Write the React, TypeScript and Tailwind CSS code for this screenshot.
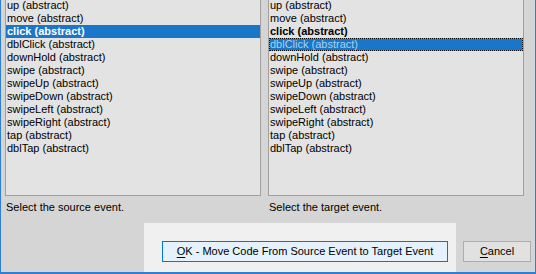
const events = [
	"up",
	"move",
	"click",
	"dblClick",
	"downHold",
	"swipe",
	"swipeUp",
	"swipeDown",
	"swipeLeft",
	"swipeRight",
	"tap",
	"dblTap",
];

/** A plain Win32-style list box */
const EventList = ({ selected, focused, bold }: { selected?: string; focused?: string; bold?: string }) => (
	<div className="-mt-[2px] h-[198px] w-[256px] border border-[#a0a0a0] bg-[#e3e3e3]">
		{events.map((name) => {
			const label = `${name} (abstract)`;
			if (name === selected)
				return (
					<div key={name} className="h-[13px] bg-[#1a76c8] pl-[1px] leading-[13px] font-bold text-white">
						{label}
					</div>
				);
			if (name === focused)
				return (
					<div key={name} className="h-[13px] bg-[#f08c00]">
						<div className="h-[13px] border border-dotted border-black bg-[#1a76c8] bg-clip-padding leading-[11px] text-[#a9d2f2]">
							{label}
						</div>
					</div>
				);
			return (
				<div key={name} className={`h-[13px] pl-[1px] leading-[13px] text-black ${name === bold ? "font-bold" : ""}`}>
					{label}
				</div>
			);
		})}
	</div>
);

export default function App() {
	return (
		<div className="flex h-[274px] w-[536px] flex-col overflow-hidden border-x border-b-2 border-[#2f7fd4] bg-[#d5d5d5] font-['Liberation_Sans',Arial,sans-serif] text-[11px] text-black">
			<div className="flex gap-[7px] pl-[4px] pr-[11px]">
				<div className="flex flex-col">
					<EventList selected="click" />
					<div className="mt-[5px] h-[13px] pl-[1px] leading-[13px]">Select the source event.</div>
				</div>
				<div className="flex flex-col">
					<EventList bold="click" focused="dblClick" />
					<div className="mt-[5px] h-[13px] pl-[1px] leading-[13px]">Select the target event.</div>
				</div>
			</div>
			{/* Button row */}
			<div className="mt-auto flex items-start pl-[143px]">
				<div className="h-[49px] w-[312px] bg-[#f0f0f0] pl-[18px] pt-[18px]">
					<button className="h-[21px] w-[286px] border border-[#0078d7] bg-[#e5f1fb] text-center leading-[19px]">
						<span className="underline underline-offset-2">O</span>K - Move Code From Source Event to Target Event
					</button>
				</div>
				<button className="ml-[7px] mt-[18px] h-[21px] w-[68px] border border-[#adadad] bg-[#e1e1e1] text-center leading-[19px]">
					<span className="underline underline-offset-2">C</span>ancel
				</button>
			</div>
		</div>
	);
}
